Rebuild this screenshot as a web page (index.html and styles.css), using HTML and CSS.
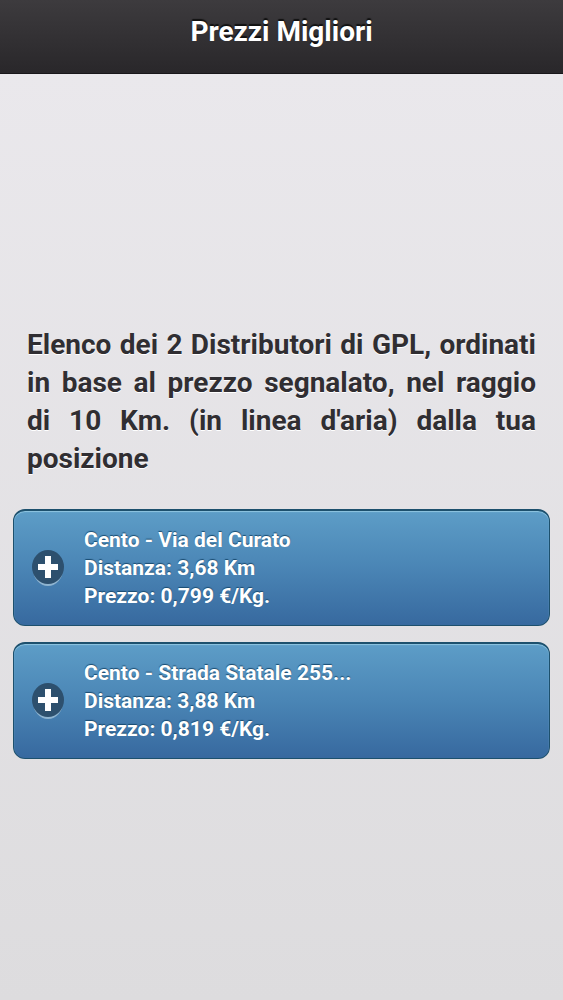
FILE: index.html
```html
<!DOCTYPE html>
<html lang="it">
<head>
  <meta charset="UTF-8" />
  <meta name="viewport" content="width=device-width, initial-scale=1.0" />
  <title>Prezzi Migliori</title>
  <link rel="stylesheet" href="styles.css">
</head>
<body>
  <header class="header">
    <h1>Prezzi Migliori</h1>
  </header>
  <main class="content">
    <p class="intro">Elenco dei 2 Distributori di GPL, ordinati in base al prezzo segnalato, nel raggio di 10 Km. (in linea d'aria) dalla tua posizione</p>
    <div class="stations">
      <button type="button" class="station">
        <svg class="plus" viewBox="0 0 32 36" aria-hidden="true">
          <ellipse cx="16" cy="19" rx="15" ry="17" fill="#8fb4d0" />
          <ellipse cx="16" cy="17" rx="16" ry="17" fill="#2d506e" />
          <path d="M13 6h6v8h7v6h-7v8h-6v-8H6v-6h7z" fill="#fff" />
        </svg>
        <span class="info">Cento - Via del Curato<br>Distanza: 3,68 Km<br>Prezzo: 0,799 €/Kg.</span>
      </button>
      <button type="button" class="station">
        <svg class="plus" viewBox="0 0 32 36" aria-hidden="true">
          <ellipse cx="16" cy="19" rx="15" ry="17" fill="#8fb4d0" />
          <ellipse cx="16" cy="17" rx="16" ry="17" fill="#2d506e" />
          <path d="M13 6h6v8h7v6h-7v8h-6v-8H6v-6h7z" fill="#fff" />
        </svg>
        <span class="info">Cento - Strada Statale 255...<br>Distanza: 3,88 Km<br>Prezzo: 0,819 €/Kg.</span>
      </button>
    </div>
  </main>
</body>
</html>
```

FILE: styles.css
```css
* {
  box-sizing: border-box;
}
body {
  margin: 0;
  min-height: 100vh;
  font-family: Roboto, "Liberation Sans", sans-serif;
  font-weight: bold;
  color: #302e32;
  background: linear-gradient(#ebe9ed, #dddcde);
}
.header {
  padding: 12px 16px 21px;
  text-align: center;
  color: #fff;
  background: linear-gradient(#3d3b3e, #29272a);
  border-bottom: 1px solid #19171a;
}
h1 {
  margin: 0;
  font-size: 28px;
  line-height: 40px;
  text-shadow: 0 -2px 1px #111;
}
.content {
  padding: 252px 13px 40px;
}
.intro {
  margin: 0 14px;
  font-size: 28px;
  line-height: 38px;
  text-align: justify;
  text-shadow: 0 1px 0 #fff;
}
.stations {
  display: flex;
  flex-direction: column;
  gap: 16px;
  margin-top: 31px;
}
.station {
  display: flex;
  align-items: center;
  gap: 20px;
  width: 100%;
  padding: 15px 18px;
  font: inherit;
  text-align: left;
  color: #fff;
  background: linear-gradient(#5d9dc7, #4a85b5 50%, #37699f);
  border: 1px solid #1d506d;
  border-top-width: 2px;
  border-radius: 12px;
  box-shadow: inset 0 1px 1px #8fc6e0;
  cursor: pointer;
}
.plus {
  flex: none;
  width: 32px;
  height: 36px;
}
.info {
  font-size: 21px;
  line-height: 28px;
  text-shadow: 0 -1px 1px #194b70;
}
```
